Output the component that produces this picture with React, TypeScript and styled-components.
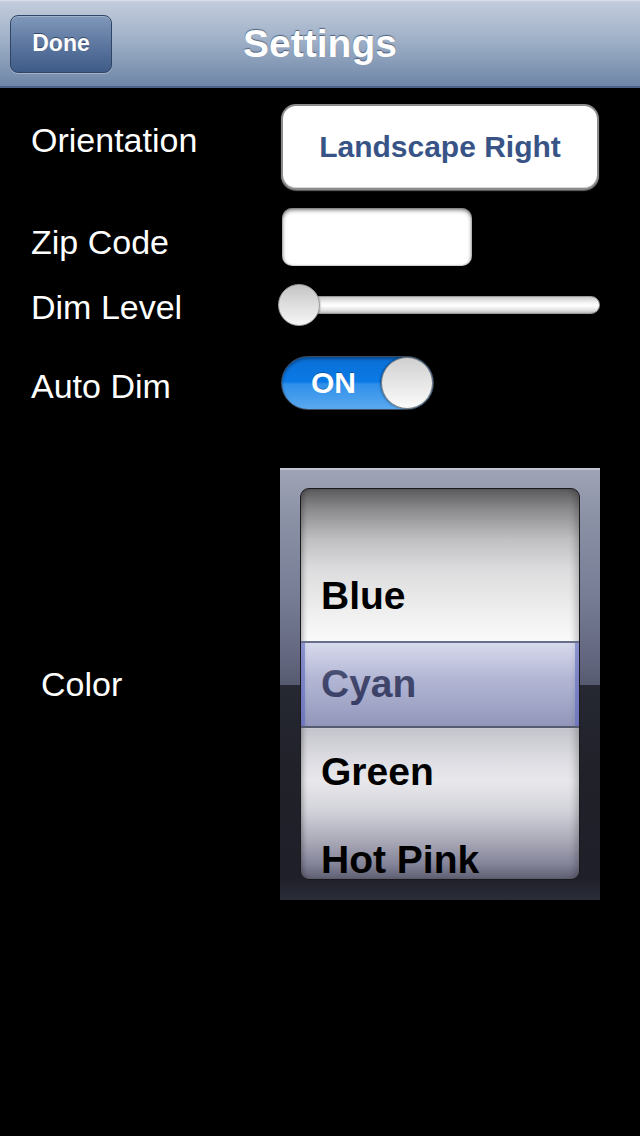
import styled, { createGlobalStyle } from 'styled-components';

const colors = ['Blue', 'Cyan', 'Green', 'Hot Pink'];
const selected = 'Cyan';

const GlobalStyle = createGlobalStyle`
  html, body {
    margin: 0;
    padding: 0;
    background: #000000;
    font-family: 'Liberation Sans', Arial, sans-serif;
  }
`;

const App = () => {
  return (
    <Screen>
      <GlobalStyle />
      <NavBar>
        <DoneButton>Done</DoneButton>
        <Title>Settings</Title>
        <span />
      </NavBar>
      <Form>
        <Row>
          <Label $top={17}>Orientation</Label>
          <OrientationButton>Landscape Right</OrientationButton>
        </Row>
        <Row $gap={18}>
          <Label $top={15}>Zip Code</Label>
          <ZipField />
        </Row>
        <Row $gap={18}>
          <Label $top={4}>Dim Level</Label>
          <Slider>
            <Track />
            <Thumb />
          </Slider>
        </Row>
        <Row $gap={30}>
          <Label $top={11}>Auto Dim</Label>
          <Switch>
            <SwitchText>ON</SwitchText>
            <Knob />
          </Switch>
        </Row>
        <Row $gap={58}>
          <Label $top={197} $indent={10}>
            Color
          </Label>
          <PickerFrame>
            <Wheel>
              <SelectionBand />
              <WheelList>
                {colors.map((c) => (
                  <WheelItem key={c} $selected={c === selected}>
                    {c}
                  </WheelItem>
                ))}
              </WheelList>
            </Wheel>
          </PickerFrame>
        </Row>
      </Form>
    </Screen>
  );
};

export default App;

const Screen = styled.div`
  width: 640px;
  min-height: 1136px;
  background: #000000;
`;

const NavBar = styled.header`
  height: 88px;
  box-sizing: border-box;
  padding: 0 10px;
  display: grid;
  grid-template-columns: 1fr auto 1fr;
  align-items: center;
  background: linear-gradient(to bottom, #dfe5ee 0px, #c2ccdc 2px, #9fb0c7 40px, #6e86a7 86px);
  border-bottom: 2px solid #4d6388;
`;

const DoneButton = styled.button`
  justify-self: start;
  width: 102px;
  height: 58px;
  margin-top: 1px;
  border: 1px solid #2f4466;
  border-radius: 8px;
  background: linear-gradient(to bottom, #8098b9 0%, #5d77a0 50%, #3e5b87 100%);
  box-shadow: inset 0 1px 0 rgba(255, 255, 255, 0.25), 0 1px 0 rgba(255, 255, 255, 0.3);
  color: #ffffff;
  font-family: 'Liberation Sans', Arial, sans-serif;
  font-weight: bold;
  font-size: 23px;
  text-shadow: 0 -1px 0 rgba(20, 35, 60, 0.6);
  padding: 0;
`;

const Title = styled.h1`
  margin: 2px 0 0 0;
  color: #ffffff;
  font-size: 39px;
  font-weight: bold;
  text-shadow: 0 -1px 1px rgba(50, 70, 100, 0.75);
`;

const Form = styled.main`
  padding: 16px 40px 0 31px;
  display: flex;
  flex-direction: column;
`;

const Row = styled.div<{ $gap?: number }>`
  display: grid;
  grid-template-columns: 249px 320px;
  align-items: start;
  margin-top: ${(p) => p.$gap ?? 0}px;
`;

const Label = styled.div<{ $top: number; $indent?: number }>`
  margin-top: ${(p) => p.$top}px;
  padding-left: ${(p) => p.$indent ?? 0}px;
  height: 38px;
  line-height: 38px;
  color: #ffffff;
  font-size: 34px;
`;

const OrientationButton = styled.button`
  margin-left: 1px;
  width: 318px;
  height: 86px;
  box-sizing: border-box;
  border: 2px solid #8c8c8c;
  border-radius: 15px;
  background: #ffffff;
  box-shadow: 0 1px 1px rgba(255, 255, 255, 0.4), inset 0 -1px 0 #d8d8d8;
  color: #385487;
  font-family: 'Liberation Sans', Arial, sans-serif;
  font-weight: bold;
  font-size: 30px;
  padding: 0;
`;

const ZipField = styled.div`
  margin-left: 2px;
  width: 190px;
  height: 58px;
  border-radius: 10px;
  background: #ffffff;
  box-shadow: inset 0 2px 4px rgba(0, 0, 0, 0.55), inset 0 0 2px rgba(0, 0, 0, 0.4);
`;

const Slider = styled.div`
  position: relative;
  margin-left: -2px;
  width: 322px;
  height: 42px;
  display: flex;
  align-items: center;
`;

const Track = styled.div`
  margin-left: 4px;
  flex: 1;
  height: 18px;
  box-sizing: border-box;
  border-radius: 9px;
  border: 1px solid #9a9a9a;
  background: linear-gradient(to bottom, #c9c9c9 0%, #f4f4f4 35%, #ffffff 55%, #dedede 85%, #b8b8b8 100%);
`;

const Thumb = styled.div`
  position: absolute;
  left: 0;
  top: 0;
  width: 42px;
  height: 42px;
  box-sizing: border-box;
  border-radius: 50%;
  border: 1px solid #9c9c9c;
  background: linear-gradient(to bottom, #c4c4c4 0%, #dcdcdc 45%, #f6f6f6 100%);
  box-shadow: 0 1px 2px rgba(0, 0, 0, 0.5);
`;

const Switch = styled.div`
  margin-left: 1px;
  width: 153px;
  height: 54px;
  box-sizing: border-box;
  border-radius: 27px;
  border: 1px solid #3d4b5c;
  display: flex;
  align-items: center;
  justify-content: space-between;
  padding: 0 0 0 29px;
  background: linear-gradient(to bottom, #0a6fd6 0%, #0b7ae6 48%, #2f8fea 52%, #5aa9ef 100%);
  box-shadow: inset 0 2px 3px rgba(0, 0, 0, 0.35);
`;

const SwitchText = styled.span`
  color: #ffffff;
  font-weight: bold;
  font-size: 30px;
  text-shadow: 0 -1px 0 rgba(0, 40, 100, 0.4);
`;

const Knob = styled.div`
  width: 52px;
  height: 52px;
  box-sizing: border-box;
  border-radius: 50%;
  border: 1px solid #7d7d7d;
  background: linear-gradient(to bottom, #d0d0d0 0%, #e6e6e6 50%, #fbfbfb 100%);
  box-shadow: -1px 0 2px rgba(0, 0, 0, 0.35);
`;

const PickerFrame = styled.div`
  width: 320px;
  height: 432px;
  box-sizing: border-box;
  padding: 20px 20px;
  border-top: 2px solid #c2c6d2;
  background: linear-gradient(
    to bottom,
    #9ea3b5 0%,
    #8a90a4 12%,
    #767c94 30%,
    #60657d 45%,
    #555a6e 49.9%,
    #262832 50%,
    #202129 70%,
    #1e1f28 95%,
    #2b2d39 100%
  );
`;

const Wheel = styled.div`
  position: relative;
  height: 392px;
  margin-top: -2px;
  overflow: hidden;
  border-radius: 9px;
  border: 1px solid #1a1a1e;
  box-sizing: border-box;
  background: linear-gradient(
    to bottom,
    #5a5a5c 0px,
    #8a8a8c 20px,
    #bfbfc1 50px,
    #dcdcde 80px,
    #f2f2f2 130px,
    #fafafa 152px,
    #ffffff 196px,
    #eeeef2 236px,
    #c4c4cc 240px,
    #dcdce2 270px,
    #e8e8ec 292px,
    #d2d2da 322px,
    #acacba 350px,
    #84849a 375px,
    #5a5a6c 392px
  );
  box-shadow: inset 5px 0 5px -3px rgba(0, 0, 0, 0.3), inset -8px 0 6px -4px rgba(0, 0, 0, 0.2);
`;

const SelectionBand = styled.div`
  position: absolute;
  left: 0;
  right: 0;
  top: 152px;
  height: 87px;
  z-index: 2;
  box-sizing: border-box;
  border-top: 2px solid #66708a;
  border-bottom: 2px solid #565c6e;
  background: linear-gradient(to bottom, rgba(180, 186, 222, 0.5) 0%, rgba(100, 108, 168, 0.5) 45%, rgba(62, 70, 136, 0.52) 100%);
  box-shadow: inset 5px 0 0 -1px rgba(100, 110, 200, 0.6), inset -5px 0 0 -1px rgba(100, 110, 200, 0.6);
`;

const WheelList = styled.ul`
  list-style: none;
  margin: 0;
  padding: 63px 0 0 20px;
`;

const WheelItem = styled.li<{ $selected: boolean }>`
  height: 88px;
  line-height: 88px;
  font-size: 39px;
  font-weight: bold;
  color: ${(p) => (p.$selected ? '#1e2230' : '#000000')};
`;
